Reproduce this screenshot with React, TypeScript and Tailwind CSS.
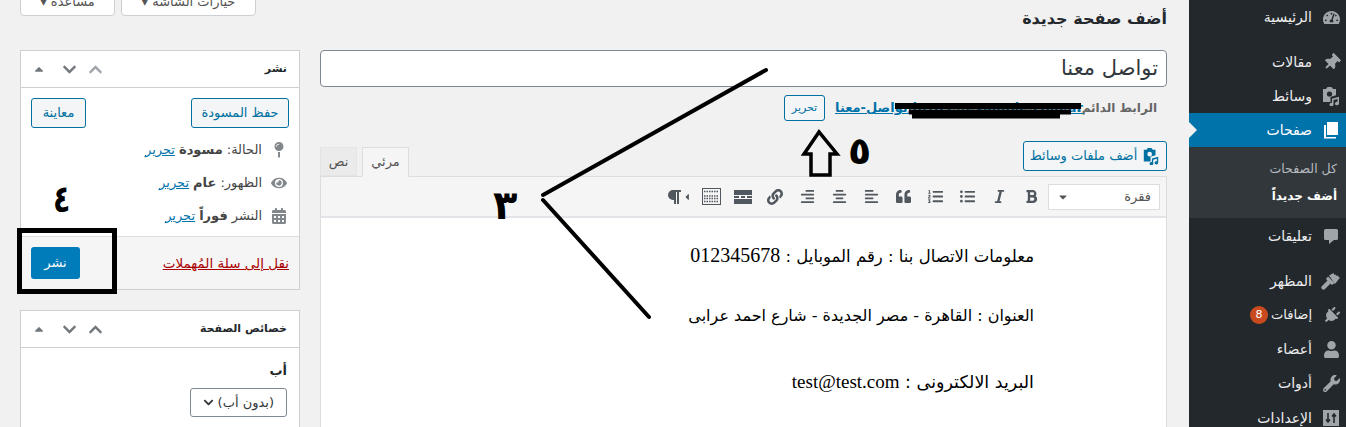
import type { ReactNode } from "react";
import {
  FaThumbtack,
  FaPlug,
  FaUser,
  FaWrench,
  FaTachometerAlt,
  FaBold,
  FaItalic,
  FaListUl,
  FaListOl,
  FaQuoteLeft,
  FaAlignLeft,
  FaAlignCenter,
  FaAlignRight,
  FaLink,
  FaParagraph,
  FaMapPin,
  FaEye,
  FaCalendarAlt,
  FaChevronDown,
  FaChevronUp,
  FaCaretUp,
  FaCaretDown,
  FaCaretLeft,
} from "react-icons/fa";

const MediaIcon = ({ className }: { className: string }) => (
  <svg viewBox="0 0 20 20" className={className} fill="currentColor">
    <path
      fillRule="evenodd"
      d="M2 3h3l1.5-2h4L12 3h3v6.3l-5.5 1.6V16H2zM8.5 5.4a2.6 2.6 0 1 0 0 5.2 2.6 2.6 0 0 0 0-5.2z"
    />
    <path d="M11 12.8l7-2v6.7a2 1.8 0 1 1-1.5-1.7v-2.8l-4 1.1v4.4a2 1.8 0 1 1-1.5-1.7z" />
  </svg>
);

const PagesIcon = () => (
  <svg viewBox="0 0 20 20" className="w-[20px] h-[20px]" fill="currentColor">
    <path d="M6 2h11v13H6z" />
    <path d="M3 5h2v12h10v1.5H3z" />
  </svg>
);

const CommentIcon = () => (
  <svg viewBox="0 0 20 20" className="w-[20px] h-[20px]" fill="currentColor">
    <path d="M4.5 3h11A1.5 1.5 0 0 1 17 4.500v8a1.500 1.500 0 0 1-1.500 1.500H13l-5 4v-4H4.500A1.500 1.500 0 0 1 3 12.500v-8A1.500 1.500 0 0 1 4.500 3z" />
  </svg>
);

const BrushIcon = () => (
  <svg viewBox="0 0 20 20" className="w-[20px] h-[20px]" fill="currentColor">
    <path d="M8 4.500L12.500 2l1 2 1.500-.5.500 1.500 1.500-.5.500 1.500 1.500.5-5 6.500z" />
    <path d="M7 5.500l6.500 6.500-2.500 2-1.500-1.500-5.500 5.500a1.500 1.500 0 0 1-3-3l5.500-5.500L5 8z" />
  </svg>
);

const SlidersIcon = () => (
  <svg viewBox="0 0 16 16" className="w-[16px] h-[16px]">
    <rect width="16" height="16" fill="#a0a5aa" />
    <path d="M5 3v9M3 9.500L5 12l2-2.500M11 13V4M9 6.500L11 4l2 2.500" fill="none" stroke="#23282d" strokeWidth="1.600" />
  </svg>
);

const MoreIcon = () => (
  <svg viewBox="0 0 18 14" className="w-[18px] h-[14px]" fill="currentColor">
    <path d="M0 0h18v5H0zM0 6h5v2H0zM7 6h4v2H7zM13 6h5v2h-5zM0 9h18v5H0z" />
  </svg>
);

const KeyboardIcon = () => (
  <svg viewBox="0 0 19 17" className="w-[19px] h-[17px]" fill="none" stroke="currentColor">
    <rect x="0.500" y="0.500" width="18" height="16" />
    <path d="M2 3.500h15M2 8h15M2 10.500h15M2 13.500h15" strokeWidth="1.600" strokeDasharray="1.500 1" />
  </svg>
);

const MenuItem = ({
  icon,
  label,
  active,
  badge,
}: {
  icon: ReactNode;
  label: string;
  active?: boolean;
  badge?: string;
}) => (
  <div className={`relative h-[34px] flex items-center pr-[5px] ${active ? "bg-[#0073aa] text-white" : "text-[#eeeeee]"}`}>
    <div className={`w-[20px] flex justify-center text-[17px] ${active ? "text-white" : "text-[#a0a5aa]"}`}>{icon}</div>
    <span className={`mr-[9px] ${badge ? "text-[13px]" : "text-[14px]"}`}>{label}</span>
    {badge && (
      <span className="mr-[3px] w-[18px] h-[18px] rounded-full bg-[#ca4a1f] text-white text-[11px] flex items-center justify-center">
        {badge}
      </span>
    )}
    {active && (
      <div className="absolute left-0 top-[9px] w-0 h-0 border-y-[8px] border-y-transparent border-l-[8px] border-l-[#f1f1f1]" />
    )}
  </div>
);

const Sidebar = () => (
  <aside className="w-[157px] shrink-0 bg-[#23282d] h-[427px] overflow-hidden">
    <MenuItem icon={<FaTachometerAlt />} label="الرئيسية" />
    <div className="h-[11px]" />
    <MenuItem icon={<FaThumbtack className="rotate-45" />} label="مقالات" />
    <MenuItem icon={<MediaIcon className="w-[20px] h-[20px]" />} label="وسائط" />
    <MenuItem icon={<PagesIcon />} label="صفحات" active />
    <div className="h-[71px] bg-[#32373c] pt-[9px] pr-[9px]">
      <div className="h-[26px] flex items-center text-[#b4b9be] text-[12.500px]">كل الصفحات</div>
      <div className="h-[28px] flex items-center text-white font-bold text-[12px]">أضف جديداً</div>
    </div>
    <div className="h-px" />
    <MenuItem icon={<CommentIcon />} label="تعليقات" />
    <div className="h-[11px]" />
    <MenuItem icon={<BrushIcon />} label="المظهر" />
    <MenuItem icon={<FaPlug className="rotate-45" />} label="إضافات" badge="8" />
    <MenuItem icon={<FaUser />} label="أعضاء" />
    <MenuItem icon={<FaWrench />} label="أدوات" />
    <div className="h-px" />
    <MenuItem icon={<SlidersIcon />} label="الإعدادات" />
  </aside>
);

const BoxHeader = ({ title, dimUp }: { title: string; dimUp?: boolean }) => (
  <div className="h-[37px] border-b border-[#ccd0d4] flex items-center justify-between pr-[12px] pl-[11px]">
    <span className="text-[11px] font-bold text-[#23282d]">{title}</span>
    <div className="flex items-center gap-[11px] text-[#72777c]">
      <FaChevronUp className={`text-[15px] ${dimUp ? "text-[#a0a5aa]" : ""}`} />
      <FaChevronDown className="text-[15px]" />
      <FaCaretUp className="text-[14px] mr-[5px]" />
    </div>
  </div>
);

const StatusRow = ({ icon, label, value }: { icon: ReactNode; label: string; value: string }) => (
  <div className="flex items-center h-[33px] text-[13px] text-[#444]">
    <div className="w-[20px] flex justify-center text-[#82878c] text-[16px]">{icon}</div>
    <span className="mr-[7px]">{label}</span>
    <span className="mr-[4px] font-bold">{value}</span>
    <span className="mr-[4px] text-[#0073aa] underline">تحرير</span>
  </div>
);

const SideColumn = () => (
  <div className="w-[280px] shrink-0">
    <div className="bg-white border border-[#ccd0d4] h-[240px] flex flex-col">
      <BoxHeader title="نشر" dimUp />
      <div className="flex justify-between px-[10px] pt-[10px]">
        <button className="w-[98px] h-[30px] border border-[#0071a1] rounded-[3px] bg-[#f3f5f6] text-[#0071a1] text-[13px]">حفظ المسودة</button>
        <button className="w-[55px] h-[30px] border border-[#0071a1] rounded-[3px] bg-[#f3f5f6] text-[#0071a1] text-[13px]">معاينة</button>
      </div>
      <div className="pr-[10px] pt-[5px]">
        <StatusRow icon={<FaMapPin />} label="الحالة:" value="مسودة" />
        <StatusRow icon={<FaEye />} label="الظهور:" value="عام" />
        <StatusRow icon={<FaCalendarAlt />} label="النشر" value="فوراً" />
      </div>
      <div className="mt-auto h-[53px] bg-[#f5f5f5] border-t border-[#dddddd] flex items-center justify-between px-[10px]">
        <span className="text-[13.500px] text-[#a00] underline">نقل إلى سلة المُهملات</span>
        <button className="w-[49px] h-[32px] rounded-[3px] bg-[#007cba] text-white text-[13px]">نشر</button>
      </div>
    </div>
    <div className="bg-white border border-[#ccd0d4] mt-[20px] h-[140px]">
      <BoxHeader title="خصائص الصفحة" />
      <div className="pr-[12px] pt-[13px] text-[13px] text-[#23282d]">
        <div className="font-bold h-[24px]">أب</div>
        <div className="w-[97px] h-[29px] mt-[3px] border border-[#7e8993] rounded-[3px] flex items-center justify-between px-[12px] text-[#32373c]">
          <span>(بدون أب)</span>
          <FaChevronDown className="text-[11px]" />
        </div>
      </div>
    </div>
  </div>
);

const ToolbarIcons = [
  <FaBold />,
  <FaItalic />,
  <FaListUl />,
  <FaListOl />,
  <FaQuoteLeft />,
  <FaAlignLeft />,
  <FaAlignCenter />,
  <FaAlignRight />,
  <FaLink className="text-[16px]" />,
  <MoreIcon />,
  <KeyboardIcon />,
  <div className="flex items-center">
    <FaCaretLeft className="text-[10px]" />
    <FaParagraph className="text-[16px]" />
  </div>,
];

const EditorColumn = () => (
  <div className="w-[847px] shrink-0">
    <div className="h-[37px] bg-white border border-[#7e8993] rounded-[4px] flex items-center px-[8px] text-[21px] text-[#32373c]">تواصل معنا</div>
    <div className="h-[26px] mt-[8px] pr-[10px] flex items-center text-[12px]">
      <span className="font-bold text-[#666] w-[74px] whitespace-nowrap">الرابط الدائم:</span>
      <span className="w-[254px] text-[#0073aa] text-[13px] font-bold underline whitespace-nowrap">
        https://example.com/ar/تواصل-معنا
      </span>
      <button className="mr-[4px] w-[41px] h-[26px] border border-[#0071a1] rounded-[3px] bg-[#f3f5f6] text-[#0071a1] text-[11px]">تحرير</button>
    </div>
    <div className="h-[54px] mt-[20px] flex justify-between items-start">
      <button className="w-[144px] h-[30px] border border-[#0071a1] rounded-[3px] bg-[#f3f5f6] text-[#0071a1] text-[13px] flex items-center justify-center gap-[5px]">
        <MediaIcon className="w-[18px] h-[18px]" />
        أضف ملفات وسائط
      </button>
      <div className="flex gap-[5px] pt-[6px] h-[36px] text-[13px] relative z-10">
        <div className="w-[47px] h-[30px] bg-[#f5f5f5] border border-[#ddd] border-b-[#f5f5f5] flex items-center justify-center text-[#555]">مرئي</div>
        <div className="w-[37px] h-[29px] bg-[#ebebeb] border border-[#e2e4e7] flex items-center justify-center text-[#555]">نص</div>
      </div>
    </div>
    <div className="-mt-[19px] bg-white border border-[#dddddd] h-[260px]">
      <div className="h-[41px] bg-[#f5f5f5] border-b-2 border-[#e2e4e7] flex items-center pr-[6px] text-[#50575e] text-[15px]">
        <div className="w-[112px] h-[26px] bg-white border border-[#dddddd] flex items-center justify-between px-[8px] text-[13px] text-[#555]">
          <span>فقرة</span>
          <FaCaretDown className="text-[12px]" />
        </div>
        <div className="flex mr-[1px]">
          {ToolbarIcons.map((icon, i) => (
            <div key={i} className="w-[32px] flex justify-center items-center">
              {icon}
            </div>
          ))}
        </div>
      </div>
      <div className="pr-[132px] pt-[22px] text-black">
        <p className="h-[64px] text-[16.500px]">
          معلومات الاتصال بنا : رقم الموبايل : <span className="text-[20px] font-['Liberation_Serif',serif]">012345678</span>
        </p>
        <p className="h-[64px] text-[16px]">العنوان : القاهرة - مصر الجديدة - شارع احمد عرابى</p>
        <p className="h-[64px] text-[17.500px]">
          البريد الالكترونى : <span className="text-[19px] font-['Liberation_Serif',serif]">test@test.com</span>
        </p>
      </div>
    </div>
  </div>
);

const Annotations = () => (
  <>
    <svg className="absolute left-0 top-0 pointer-events-none" width="1346" height="427" fill="none" stroke="#000">
      <path d="M766 70 L543 195" strokeWidth="4" strokeLinecap="round" />
      <path d="M543 200 L649 317" strokeWidth="4" strokeLinecap="round" />
      <path d="M819 132 L804 154 L811 154 L811 175 L830 175 L830 154 L837 154 Z" strokeWidth="3.500" fill="#f1f1f1" />
      <path d="M895 106 L1081 106" strokeWidth="6" />
      <path d="M909 112 L1071 112 M912 116 L1060 116" strokeWidth="5" />
    </svg>
    <div className="absolute left-[17px] top-[228px] w-[100px] h-[66px] border-[5px] border-black pointer-events-none" />
    <span className="absolute left-[493px] top-[180px] text-[40px] leading-[50px] font-bold text-black">٣</span>
    <span className="absolute left-[50px] top-[174px] text-[38px] leading-[50px] font-bold text-black scale-x-75">٤</span>
    <span className="absolute left-[848px] top-[126px] text-[38px] leading-[50px] font-bold text-black">٥</span>
  </>
);

export default function App() {
  return (
    <div dir="rtl" className="relative flex w-[1346px] h-[427px] overflow-hidden bg-[#f1f1f1] font-['DejaVu_Sans',sans-serif]">
      <Sidebar />
      <main className="flex-1 pr-[22px] pl-[20px]">
        <div className="flex justify-between h-[50px]">
          <h1 className="text-[16px] font-bold text-[#23282d] pt-[7px]">أضف صفحة جديدة</h1>
          <div className="flex gap-[6px] -mt-[12px]">
            <button className="w-[135px] h-[28px] bg-white border border-[#ccd0d4] rounded-b-[4px] text-[#555] text-[13px]">خيارات الشاشة ▾</button>
            <button className="w-[95px] h-[28px] bg-white border border-[#ccd0d4] rounded-b-[4px] text-[#555] text-[13px]">مساعدة ▾</button>
          </div>
        </div>
        <div className="flex gap-[20px] items-start">
          <EditorColumn />
          <SideColumn />
        </div>
      </main>
      <Annotations />
    </div>
  );
}
